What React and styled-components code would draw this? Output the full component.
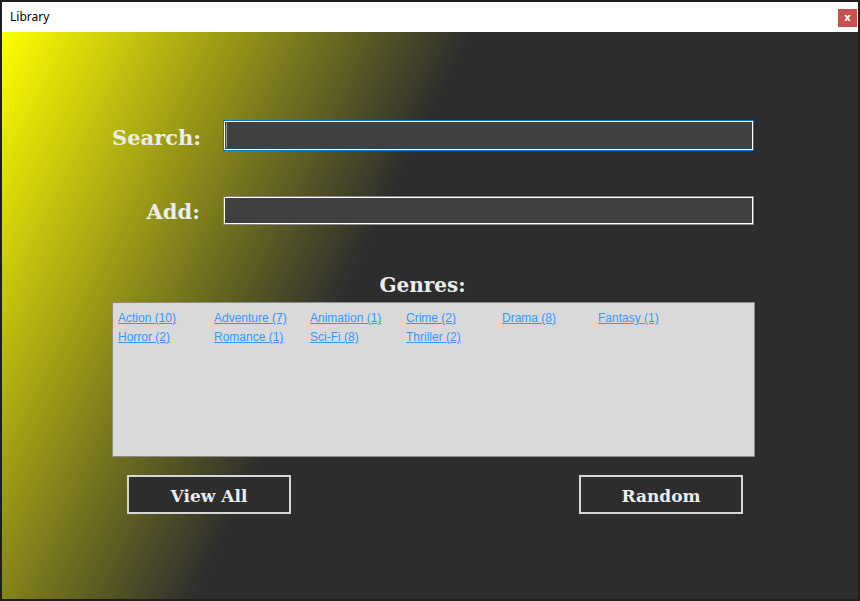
import React from "react";
import styled, { createGlobalStyle } from "styled-components";

const Global = createGlobalStyle`
  html, body { margin: 0; padding: 0; background: #1e1e1e; }
  * { box-sizing: border-box; }
`;

const Window = styled.div`
  width: 860px;
  height: 601px;
  border: 2px solid #1e1e1e;
  display: flex;
  flex-direction: column;
  overflow: hidden;
`;

const TitleBar = styled.div`
  height: 30px;
  background: #ffffff;
  display: flex;
  align-items: center;
  justify-content: space-between;
  padding: 0 1px 0 8px;
`;

const Title = styled.span`
  font-family: "Noto Sans", "Open Sans", sans-serif;
  font-size: 12px;
  color: #000;
  margin-top: -1px;
`;

const CloseButton = styled.button`
  width: 19px;
  height: 18px;
  border: none;
  padding: 0;
  background: #c75050;
  color: #fff;
  font-family: "DejaVu Sans", sans-serif;
  font-weight: bold;
  font-size: 10px;
  line-height: 18px;
  margin-top: 1px;
`;

const Body = styled.div`
  flex: 1;
  background: linear-gradient(116deg, #ffff00 0%, #2d2d2d 41.5%, #2d2d2d 100%);
  padding: 88px 0 0 110px;
  display: flex;
  flex-direction: column;
`;

const Form = styled.div`
  display: grid;
  grid-template-columns: 88px 531px;
  column-gap: 23px;
  row-gap: 45px;
  align-items: center;
`;

const Label = styled.label`
  font-family: "DejaVu Serif", serif;
  font-weight: bold;
  font-size: 21px;
  color: #ececec;
  text-align: right;
  white-space: nowrap;
  padding-top: ${(p) => p.$shift || 0}px;
`;

const Input = styled.div`
  height: ${(p) => p.$h}px;
  background: #404040;
  border: 1px solid #ffffff;
  outline: 1px solid ${(p) => (p.$focused ? "#0078d7" : "#8a8a8a")};
  margin: 1px;
  position: relative;
`;

const Caret = styled.span`
  position: absolute;
  left: 1px;
  top: 1px;
  bottom: 1px;
  width: 1px;
  background: #9a9a9a;
`;

const Heading = styled.div`
  font-family: "DejaVu Serif", serif;
  font-weight: bold;
  font-size: 20px;
  color: #ececec;
  width: 643px;
  text-align: center;
  padding-right: 22px;
  margin-top: 47px;
  height: 30px;
  line-height: 26px;
`;

const GenreBox = styled.div`
  width: 643px;
  height: 155px;
  background: #d9d9d9;
  border: 1px solid #8c8c8c;
  padding: 6px 5px;
  display: grid;
  grid-template-columns: repeat(6, 96px);
  grid-auto-rows: 19px;
  align-content: start;
`;

const GenreLink = styled.a`
  font-family: "Liberation Sans", Arial, sans-serif;
  font-size: 12px;
  color: #3399ff;
  text-decoration: underline;
  line-height: 19px;
  white-space: nowrap;
`;

const Buttons = styled.div`
  display: flex;
  justify-content: space-between;
  width: 616px;
  margin: 18px 0 0 15px;
`;

const Button = styled.button`
  width: 164px;
  height: 39px;
  background: #2d2d2d;
  border: 2px solid #d6d6d6;
  color: #ececec;
  font-family: "DejaVu Serif", serif;
  font-weight: bold;
  font-size: 17px;
  padding: 3px 0 0;
  line-height: 32px;
`;

const genres = [
  "Action (10)",
  "Adventure (7)",
  "Animation (1)",
  "Crime (2)",
  "Drama (8)",
  "Fantasy (1)",
  "Horror (2)",
  "Romance (1)",
  "Sci-Fi (8)",
  "Thriller (2)",
];

export default function App() {
  return (
    <>
      <Global />
      <Window>
        <TitleBar>
          <Title>Library</Title>
          <CloseButton>x</CloseButton>
        </TitleBar>
        <Body>
          <Form>
            <Label $shift={4}>Search:</Label>
            <Input $focused $h={29}>
              <Caret />
            </Input>
            <Label $shift={2}>Add:</Label>
            <Input $h={27} />
          </Form>
          <Heading>Genres:</Heading>
          <GenreBox>
            {genres.map((g) => (
              <GenreLink key={g} href="#">
                {g}
              </GenreLink>
            ))}
          </GenreBox>
          <Buttons>
            <Button>View All</Button>
            <Button>Random</Button>
          </Buttons>
        </Body>
      </Window>
    </>
  );
}
